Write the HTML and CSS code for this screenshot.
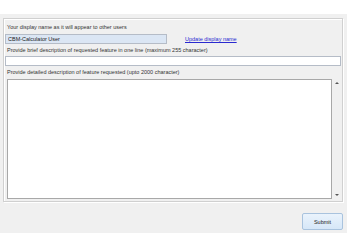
FILE: index.html
```html
<!DOCTYPE html>
<html lang="en">
<head>
    <meta charset="UTF-8">
    <meta name="viewport" content="width=device-width, initial-scale=1.0">
    <title>Request a Feature</title>
    <link rel="stylesheet" href="styles.css">
</head>
<body>
    <div class="panel">
        <div class="group">
            <div class="label first">Your display name as it will appear to other users</div>
            <div class="name-row">
                <input type="text" class="name-input" value="CBM-Calculator User">
                <a href="#" class="update-link">Update display name</a>
            </div>
            <div class="label">Provide brief description of requested feature in one line (maximum 255 character)</div>
            <input type="text" class="brief-input">
            <div class="label">Provide detailed description of feature requested (upto 2000 character)</div>
            <div class="detail-box">
                <textarea class="detail-input"></textarea>
                <div class="scrollbar">
                    <span class="arrow up"></span>
                    <span class="arrow down"></span>
                </div>
            </div>
        </div>
        <div class="actions">
            <button class="submit">Submit</button>
        </div>
    </div>
</body>
</html>
```

FILE: styles.css
```css
body { margin: 0; background: #ffffff; font-family: "Liberation Sans", Arial, sans-serif; font-size: 5.5px; color: #333; }
.panel { margin-top: 14px; width: 347px; height: 219px; background: #f0f0f0; padding: 4px 4px 0 3px; box-sizing: border-box; display: flex; flex-direction: column; }
.group { border: 1px solid #d0d0d0; box-shadow: inset 1px 1px 0 #fff, 1px 1px 0 #fff; height: 184px; box-sizing: border-box; padding: 0 1px 2px 1px; display: flex; flex-direction: column; }
.label { height: 12px; line-height: 12px; padding-left: 2px; white-space: nowrap; }
.label.first { height: 15px; line-height: 14px; padding-top: 1px; box-sizing: border-box; }
.name-row { display: flex; align-items: center; gap: 18px; height: 10px; }
input { font-family: inherit; font-size: 5.5px; color: #222; margin: 0; padding: 0 2px; height: 10px; box-sizing: border-box; border: 1px solid #b5bcc7; outline: none; }
.name-input { width: 162px; background: #dbe6f4; }
.brief-input { width: 336px; background: #fff; }
.update-link { color: #2a2ad0; text-decoration: underline; }
.detail-box { display: flex; height: 120px; margin-top: 1px; margin-left: 2px; }
.detail-input { width: 325px; height: 120px; box-sizing: border-box; border: 1px solid #a8a8a8; resize: none; margin: 0; background: #fff; outline: none; }
.scrollbar { width: 9px; position: relative; background: #f0f0f0; }
.arrow { position: absolute; left: 3px; width: 0; height: 0; border-left: 2px solid transparent; border-right: 2px solid transparent; }
.arrow.up { top: 3px; border-bottom: 2px solid #555; }
.arrow.down { bottom: 3px; border-top: 2px solid #555; }
.actions { display: flex; justify-content: flex-end; padding-top: 11px; }
.submit { width: 41px; height: 17px; margin-right: 0; font-family: inherit; font-size: 5.5px; color: #222; background: linear-gradient(#eaf3fc, #d6e7f8); border: 1px solid #a9c3de; border-radius: 2px; }
```
